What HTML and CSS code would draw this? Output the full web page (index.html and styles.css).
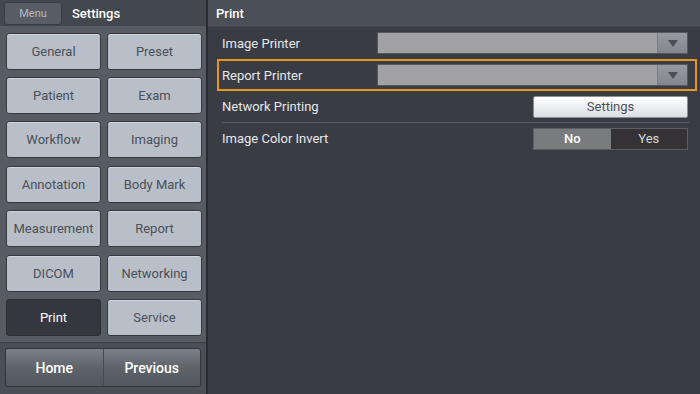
FILE: index.html
```html
<!DOCTYPE html>
<html lang="en">
<head>
    <meta charset="UTF-8">
    <meta name="viewport" content="width=device-width, initial-scale=1.0">
    <title>Settings - Print</title>
    <link rel="stylesheet" href="styles.css">
</head>
<body>
    <div class="sidebar">
        <div class="side-head">
            <button class="menu-btn">Menu</button>
            <span class="side-title">Settings</span>
        </div>
        <div class="nav-grid">
            <button class="nav-btn">General</button>
            <button class="nav-btn">Preset</button>
            <button class="nav-btn">Patient</button>
            <button class="nav-btn">Exam</button>
            <button class="nav-btn">Workflow</button>
            <button class="nav-btn">Imaging</button>
            <button class="nav-btn">Annotation</button>
            <button class="nav-btn">Body Mark</button>
            <button class="nav-btn">Measurement</button>
            <button class="nav-btn">Report</button>
            <button class="nav-btn">DICOM</button>
            <button class="nav-btn">Networking</button>
            <button class="nav-btn active">Print</button>
            <button class="nav-btn">Service</button>
        </div>
        <div class="side-foot">
            <div class="foot-bar">
                <button class="foot-btn">Home</button>
                <button class="foot-btn">Previous</button>
            </div>
        </div>
    </div>

    <div class="main">
        <div class="main-head">Print</div>
        <div class="main-body">
            <div class="row">
                <span class="label">Image Printer</span>
                <div class="select"><span class="select-arrow"></span></div>
            </div>
            <div class="row focused">
                <span class="label">Report Printer</span>
                <div class="select"><span class="select-arrow"></span></div>
            </div>
            <div class="row short">
                <span class="label">Network Printing</span>
                <button class="light-btn">Settings</button>
            </div>
            <div class="divider"></div>
            <div class="row short">
                <span class="label">Image Color Invert</span>
                <div class="toggle">
                    <span class="opt on">No</span>
                    <span class="opt">Yes</span>
                </div>
            </div>
        </div>
    </div>
</body>
</html>
```

FILE: styles.css
```css
* { box-sizing: border-box; }
body { margin: 0; width: 700px; height: 394px; display: flex; font-family: Roboto, "Liberation Sans", sans-serif; background: #2a2c31; overflow: hidden; }
button { font-family: inherit; cursor: pointer; }

/* left column */
.sidebar { width: 206px; display: flex; flex-direction: column; background: #575b62; }
.side-head { height: 27px; display: flex; align-items: center; padding: 0 4px; gap: 10px; background: #43474e; }
.menu-btn { width: 58px; height: 23px; border: 1px solid #3b3e44; border-radius: 3px; background: #585d65; color: #b5b9c0; font-size: 11px; padding: 0; }
.side-title { color: #fff; font-size: 13px; font-weight: 500; }
.nav-grid { display: grid; grid-template-columns: 95px 95px; grid-auto-rows: 37px; column-gap: 6px; row-gap: 7.4px; padding: 6.5px 5px 6px 6px; background: #575b62; }
.nav-btn { height: 37px; border: 1px solid #35383e; border-radius: 3px; background: #b9bfc9; color: #4a4f58; font-size: 13px; padding: 0; box-shadow: inset 0 1px 0 #d0d5dd; }
.nav-btn.active { background: #34373e; color: #fff; box-shadow: none; border-color: #2c2f34; }
.side-foot { flex: 1; padding: 5px 5px 7px 5px; background: #4a4e55; border-top: 1px solid #3c3f45; }
.foot-bar { display: flex; height: 39px; border: 1px solid #33363b; border-radius: 3px; overflow: hidden; }
.foot-btn { flex: 1; border: none; color: #fff; font-size: 14px; font-weight: 500; background: linear-gradient(#7a8088, #5f646b 50%, #52575e); }
.foot-btn + .foot-btn { border-left: 1px solid #474b51; }

/* right column */
.main { flex: 1; margin-left: 2px; display: flex; flex-direction: column; background: #393c43; }
.main-head { height: 27px; display: flex; align-items: center; padding-left: 8px; background: #4b4f57; color: #fff; font-size: 13px; font-weight: 500; border-bottom: 1px solid #42454c; }
.main-body { padding: 0 3px 0 9px; display: flex; flex-direction: column; }
.row { height: 32px; display: flex; align-items: center; justify-content: space-between; padding: 0 7px 0 3px; border: 2px solid transparent; }
.row.short { height: 31px; }
.row.focused { border-color: #e8951f; }
.label { color: #e6e7ea; font-size: 13px; }
.select { width: 311px; height: 22px; display: flex; justify-content: flex-end; background: #a2a2a4; border: 1px solid #55585e; }
.select-arrow { width: 30px; display: flex; align-items: center; justify-content: center; background: linear-gradient(#979aa0, #83878d); border-left: 1px solid #7a7d82; }
.select-arrow::after { content: ""; border-left: 5px solid transparent; border-right: 5px solid transparent; border-top: 7px solid #4b4f56; }
.light-btn { width: 155px; height: 22px; border: 1px solid #8c9096; border-radius: 2px; background: linear-gradient(#ffffff, #dcdee3); color: #4a4f58; font-size: 13px; padding: 0; }
.divider { height: 1px; margin: 0 8px 0 5px; background: #585c63; }
.toggle { width: 155px; height: 22px; display: flex; border: 1px solid #5b5e63; }
.opt { flex: 1; display: flex; align-items: center; justify-content: center; background: #353236; color: #d8d8da; font-size: 13px; }
.opt.on { background: #7a7b7e; color: #fff; font-weight: 500; }
```
